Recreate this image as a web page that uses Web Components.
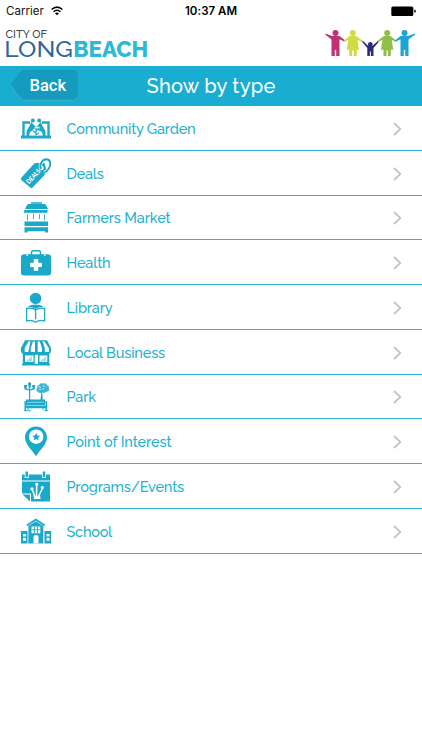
<!DOCTYPE html>
<html lang="en">
<head>
<meta charset="utf-8">
<title>Show by type</title>
<style>
  body {
    margin: 0;
    background: #fff;
    font-family: Raleway, Lato, "Open Sans", sans-serif;
  }
</style>
</head>
<body>
<city-app>
  <status-bar carrier="Carrier" time="10:37 AM"></status-bar>
  <city-logo></city-logo>
  <nav-bar back="Back">Show by type</nav-bar>
  <type-row icon="garden" width="129">Community Garden</type-row>
  <type-row icon="deals" width="37">Deals</type-row>
  <type-row icon="market" width="104">Farmers Market</type-row>
  <type-row icon="health" width="44">Health</type-row>
  <type-row icon="library" width="46">Library</type-row>
  <type-row icon="business" width="98.5">Local Business</type-row>
  <type-row icon="park" width="29.5">Park</type-row>
  <type-row icon="poi" width="105">Point of Interest</type-row>
  <type-row icon="events" width="117.5">Programs/Events</type-row>
  <type-row icon="school" width="45.5">School</type-row>
</city-app>

<script>
// Icons are drawn on a 32x33 grid in the current colour; white parts are cut-outs.
const icons = {
  garden: `
    <path d="M1 23.500h30v3H1z"/>
    <circle cx="12.800" cy="8.500" r="2"/><circle cx="19.200" cy="8.500" r="2"/>
    <path d="M6.500 24v-5l3.500-6 1-3 2 2 3 3-2 3-4 2-1 4.500zM25.500 24v-5l-3.500-6-1-3-2 2-3 3 2 3 4 2 1 4.500z"/>
    <path d="M3.500 24V10.500H10M28.500 24V10.500H22" fill="none" stroke="currentColor" stroke-width="2.400"/>
    <path d="M16 24v-9m0 5-3-2m3 0 3-3m-3 8 3-2" fill="none" stroke="#fff" stroke-width="2.800"/>
    <path d="M16 25v-9m0 5-3-2m3 0 3-3m-3 7 3-2" fill="none" stroke="currentColor" stroke-width="1.200"/>`,
  deals: `
    <path d="M1.500 20.500 14.500 6.300 22.500 5.400q2.200 0 2.500 1.800l1.800 8.500L12.500 30.500q-1 1-2.200 0L1.300 22.900q-1-1 .2-2.400z"/>
    <circle cx="21.500" cy="11" r="2.200" fill="#fff"/>
    <path d="M21 12C19 8 22 2.300 26.300 2.200 31 2.200 31.300 8 28.500 12q-2 3-4.600 3.600" fill="none" stroke="#fff" stroke-width="3.200"/>
    <path d="M21 12C19 8 22 2.300 26.300 2.200 31 2.200 31.300 8 28.500 12q-2 3-4.600 3.600" fill="none" stroke="currentColor" stroke-width="1.900"/>
    <text x="9" y="27.300" transform="rotate(-47 9 27.300)" textLength="17.500" lengthAdjust="spacingAndGlyphs" font-family="Lato" font-size="6.600" font-weight="900" fill="#fff">DEALS</text>`,
  market: `
    <path d="M11 1.200h11v1.500H11zM8 3h17q2 2 3 5H5q1-3 3-5zM4.500 9h23v2.200q-1.200 2-2.500 0-1.300 2-2.600 0-1.300 2-2.600 0-1.300 2-2.600 0-1.300 2-2.600 0-1.300 2-2.600 0-1.300 2-2.600 0-1.300 2-2.600 0-1.700 2-2.800 0z"/>
    <path d="M7.500 13.500v6m17-6v6M13.500 13v5m6-5v5" fill="none" stroke="currentColor" stroke-width=".9"/>
    <path d="M4.500 20.500h23.500V25H4.500zM4.500 26.200h23.500v5.200h-3V30.300h-17.500v1.100h-3z"/>`,
  health: `
    <path d="M11.500 9V6.500q0-1.700 1.700-1.700h5.600q1.700 0 1.700 1.700V9" fill="none" stroke="currentColor" stroke-width="1.500"/>
    <path d="M4 8.200h24q3 0 3 3v15.300q0 3-3 3H4q-3 0-3-3V11.200q0-3 3-3z"/>
    <path d="M6.500 8.200h1.200V10H6.500zm17.800 0h1.200V10h-1.200zM13.800 13h4.400v3.700h3.700V21h-3.700v3.700h-4.400V21h-3.700v-4.300h3.700z" fill="#fff"/>`,
  library: `
    <circle cx="15.600" cy="7.400" r="5.700"/>
    <path d="M7.500 15.500q8-3.800 16.200 0l-2.200.4q-3 .1-5.900 2-3-2-8.100-2.400z"/>
    <path d="M15.600 31.200q-4-2.800-9-1.200V17.500q5.500-1.300 9 1.600 3.500-2.900 9-1.600V30q-5-1.600-9 1.200zm0-12v9" fill="none" stroke="currentColor" stroke-width="1.300"/>`,
  business: `
    <path d="M5 4.200h22l4 7.800q1 5-2.500 6h-25Q0 17 1 12z"/>
    <path d="M8.500 5.500h2L8 17H4.700V12zM13 5.500h2V17h-4.200v-5zM17.700 5.500h2l2.200 6.500v5h-4.200zM22.500 5.500h2l4.500 7v4h-4.200V12z" fill="#fff"/>
    <path d="M2.800 16h26.400v12H2.800zM1.800 27.800h28.400v1.700H1.800z"/>
    <path d="M5 19.500h8.500v6.300H5zm14.500 0h7.800v6.300h-7.800zM14.800 18.800H18v9h-3.200z" fill="#fff"/>
    <path d="m6 25 6-5v5zm14.500 0 5.700-5v5z" opacity=".4"/>`,
  park: `
    <path d="M9.600 2v22M5.500 8.500q4 3 8.200 0" fill="none" stroke="currentColor" stroke-width="1.200"/>
    <path d="M8 3h3.200l-.7 4.500H8.700zM3.900 5h3.200l-.7 4.500H4.600zm8.200 0h3.200l-.7 4.500h-1.800z"/>
    <path d="M22.500 3.500q4.500-1 4.500 1.800 2.500 0 1.800 2.700 1.500 3-1.800 3.600-3 2.500-5 .7-3 1.500-4.700-.8-2-1.900.2-3.500-1.500-2.700 1.700-2.900Q19.700 2.500 22.500 3.500z" opacity=".85"/>
    <path d="m18 6.500 3 1m2-2 2 1m-3 3 2-1m-5 1h2" fill="none" stroke="#fff" stroke-width=".7"/>
    <path d="M21.300 8q1.500 6 1.500 13h-2.500q1-5 1-13z"/>
    <path d="M6 19.500h19v6H6zM4.500 26h22.500v2.200H4.500zM4.500 21H6v10H4.500zm21 0H27v10h-1.500z"/>
    <path d="M7 22.300h17" stroke="#fff" stroke-width=".5"/>
    <path d="M4 30.700h7m13 0h4M8 28v2m15-2v2" stroke="currentColor" stroke-width=".9"/>`,
  poi: `
    <path d="M16 1.500A11 11 0 0 1 27 12.500C27 19 20 25 16 31.300 12 25 5 19 5 12.500A11 11 0 0 1 16 1.500z"/>
    <circle cx="16.200" cy="11.700" r="7.200" fill="#fff"/>
    <path d="m16.200 7.800 1.200 2.600 2.800.3-2.100 2 .6 2.800-2.500-1.400-2.500 1.400.6-2.800-2.100-2 2.800-.3z"/>`,
  events: `
    <path d="M2 4.500h28v6H2zM2 11.500h28v20H11L2 24z"/>
    <path d="M4.700 3h4v5h-4zm17.300 0h4v5h-4z" fill="#fff"/>
    <path d="M5.500 1.600h2.400v5.600H5.500zm17.300 0h2.400v5.600h-2.400z"/>
    <path d="M1 23.500h10v9L1 31z" fill="#fff"/>
    <path d="M2.500 24.500H10v7z"/>
    <path d="m16 29-3.800-9.500M16.500 29l.2-14m.5 14 5-10" fill="none" stroke="#fff" stroke-width="1.500"/>
    <path d="M14 29h6.500L20 24.500 17 27l-3.500-2z" fill="#fff"/>
    <circle cx="12" cy="18.800" r="1.600" fill="#fff"/><circle cx="16.700" cy="14.300" r="1.600" fill="#fff"/><circle cx="22.300" cy="17.500" r="1.600" fill="#fff"/>`,
  school: `
    <path d="m6.800 10.600 9-6 9 6" fill="none" stroke="currentColor" stroke-width="1.800"/>
    <path d="m8.500 11 7.300-4.800L23.300 11v17.500h-15zM1 17h6.500v11.500H1zm23.500 0H31v11.500h-6.500zM.6 16h7.100v1.200H.6zm23.700 0h7.100v1.200h-7.100z"/>
    <path d="M11.500 11.500h8.800v6.700h-8.800zM13.500 28.500v-7.300q2.500-2.200 5 0v7.300zM3 19h3v2.500H3zm0 4h3v2.700H3zm23.500-4h3v2.500h-3zm0 4h3v2.700h-3z" fill="#fff"/>
    <path d="M14.300 11.500v6.700m3.200-6.700v6.700m-6-3.400h8.800" stroke="currentColor" stroke-width=".9"/>`
};

// Spread the letters of a label so that it takes the given width.
function fitText(el, text, width) {
  const natural = el.getBoundingClientRect().width;
  el.style.letterSpacing = `${(width - natural) / text.length}px`;
}

class CityApp extends HTMLElement {
  constructor() {
    super();
    this.attachShadow({ mode: "open" }).innerHTML = `
      <style>
        :host {
          display: flex;
          flex-direction: column;
          height: 750px;
          overflow: hidden;
          background: #fff;
        }
      </style>
      <slot></slot>`;
  }
}

class StatusBar extends HTMLElement {
  constructor() {
    super();
    this.attachShadow({ mode: "open" }).innerHTML = `
      <style>
        :host {
          display: grid;
          grid-template-columns: 1fr auto 1fr;
          align-items: center;
          height: 22px;
          box-sizing: border-box;
          padding: 0 6px;
          font: 11.5px/22px Inter, "Liberation Sans", sans-serif;
          color: #111;
        }
        .left { display: flex; align-items: center; gap: 7px; }
        .time { font-weight: 600; color: #000; }
        .right { display: flex; justify-content: flex-end; }
        svg { display: block; }
      </style>
      <div class="left">
        <span id="carrier">${this.getAttribute("carrier")}</span>
        <svg width="12" height="10" viewBox="0 0 12 10" fill="none" stroke="#000" stroke-width="1.500">
          <path d="M.6 3.500q5.400-4.700 10.800 0M2.500 5.800q3.500-3 7 0"/>
          <path d="M6 9.300 3.900 7.300q2.100-1.500 4.200 0z" fill="#000" stroke="none"/>
        </svg>
      </div>
      <span class="time" id="time">${this.getAttribute("time")}</span>
      <div class="right">
        <svg width="26" height="11" viewBox="0 0 26 11">
          <rect x="1.300" y=".4" width="22" height="9.600" rx="1.500"/>
          <path d="M24.300 3.600q1.500.2 1.500 1.600t-1.500 1.600z"/>
        </svg>
      </div>`;
  }

  connectedCallback() {
    fitText(this.shadowRoot.getElementById("carrier"), "Carrier", 38);
    fitText(this.shadowRoot.getElementById("time"), "10:37 AM", 52);
  }
}

class CityLogo extends HTMLElement {
  constructor() {
    super();
    this.attachShadow({ mode: "open" }).innerHTML = `
      <style>
        :host {
          display: flex;
          justify-content: space-between;
          height: 43.500px;
          box-sizing: border-box;
          padding: 3px 6px 0 5px;
        }
        svg { display: block; }
      </style>
      <svg width="146" height="38" viewBox="5 25 146 38">
        <text x="5.500" y="37.800" font-size="11.600" font-weight="500" textLength="41.500" lengthAdjust="spacingAndGlyphs" fill="#414449">CITY OF</text>
        <text x="4.300" y="56.500" font-size="22.800" font-weight="500" textLength="68.500" lengthAdjust="spacingAndGlyphs" fill="#2f669c">LONG</text>
        <text x="73.300" y="56.500" font-size="22.800" font-weight="800" textLength="75" lengthAdjust="spacingAndGlyphs" fill="#2bb9d5">BEACH</text>
      </svg>
      <svg width="92" height="32" viewBox="324.500 25 92 32">
        <g fill="#c22f72">
          <circle cx="336" cy="33" r="3"/>
          <path d="m326 33.500 6.500 2.500h7.500l5.500 4.300-.8 1.300-4.700-2.300V56h-3.300v-6h-1.400v6H332V39.500l-6-4.800z"/>
        </g>
        <g fill="#d0dc45">
          <circle cx="353.300" cy="33" r="3"/>
          <path d="M350 36h6.600l7 5-.9 1.200-4.700-2.400 1.500 10h-2.300V56h-3v-5.500h-1.500V56h-3v-6.200h-2.500l1.600-10-4 2.400-.8-1.100z"/>
        </g>
        <g fill="#2e2b78">
          <circle cx="370.800" cy="44.200" r="2.300"/>
          <path d="m363.300 40.800 5 4.700h5l5.300-4.700.8 1-5.400 6.200v8h-2.600v-4.500h-1V56h-2.600v-8l-5.200-6.200z"/>
        </g>
        <g fill="#91be4b">
          <circle cx="387.700" cy="33" r="3"/>
          <path d="M384.500 36h6.500l6 4.800-.8 1.300-4-2.300 1.600 10h-2.500V56h-3v-5.500H387V56h-3v-6.200h-2.500l1.500-10-4.500 2.500-.8-1.300z"/>
        </g>
        <g fill="#1da4d4">
          <circle cx="405" cy="33" r="3"/>
          <path d="m415.500 33.500-7 2.500H401l-5.200 4.300.8 1.300 4.400-2.300V56h3.300v-6h1.400v6h3.300V39.500l6.500-4.800z"/>
        </g>
      </svg>`;
  }
}

class NavBar extends HTMLElement {
  constructor() {
    super();
    this.attachShadow({ mode: "open" }).innerHTML = `
      <style>
        :host {
          display: grid;
          grid-template-columns: 1fr auto 1fr;
          align-items: center;
          height: 40.500px;
          box-sizing: border-box;
          padding: 0 10px;
          background: #18add1;
          color: #fff;
        }
        .back {
          display: grid;
          width: 68px;
          height: 31px;
          cursor: pointer;
        }
        .back > * { grid-area: 1 / 1; }
        .label {
          justify-self: start;
          padding: 1px 0 0 19.500px;
          font: 500 16.500px/30px Roboto, sans-serif;
        }
        h1 {
          margin: 0;
          font-size: 20px;
          font-weight: 550;
          line-height: 40px;
          white-space: nowrap;
        }
      </style>
      <div class="back">
        <svg width="68" height="31" viewBox="0 0 68 31">
          <path d="M1 15 10.500 2.500Q12 .7 14 .7H64q3 0 3 3v23.600q0 3-3 3H14q-2 0-3.500-1.800z" fill="#149bbd" stroke="#1492b2" stroke-width=".8"/>
          <path d="M.8 15.500 10.500 28.500q1.500 1.800 3.500 1.800h50q3 0 3-3" fill="none" stroke="#55c2dc" stroke-width=".7"/>
        </svg>
        <span class="label">${this.getAttribute("back")}</span>
      </div>
      <h1><slot></slot></h1>`;
  }

  connectedCallback() {
    fitText(this.shadowRoot.querySelector("h1"), "Show by type", 129);
  }
}

class TypeRow extends HTMLElement {
  constructor() {
    super();
    this.attachShadow({ mode: "open" }).innerHTML = `
      <style>
        :host {
          display: flex;
          align-items: center;
          height: 44.780px;
          flex: none;
          box-sizing: border-box;
          padding: 0 20px;
          border-bottom: 1px solid #2fb9d6;
          color: #1ba9ca;
        }
        svg { display: block; flex: none; fill: currentColor; }
        .icon { margin-top: 1px; }
        .label {
          margin-left: 14.500px;
          padding-top: 2px;
          font-size: 14.500px;
          font-weight: 500;
          line-height: 20px;
          white-space: nowrap;
          color: #23b2cf;
        }
        .chevron { margin: 2px 0 0 auto; fill: none; }
      </style>
      <svg class="icon" width="32" height="33" viewBox="0 0 32 33">${icons[this.getAttribute("icon")]}</svg>
      <span class="label"><slot></slot></span>
      <svg class="chevron" width="9" height="14" viewBox="0 0 9 14">
        <path d="m1 1 6.300 6L1 13" stroke="#c4c4c8" stroke-width="1.800"/>
      </svg>`;
  }

  connectedCallback() {
    fitText(this.shadowRoot.querySelector(".label"), this.textContent, Number(this.getAttribute("width")));
  }
}

customElements.define("city-app", CityApp);
customElements.define("status-bar", StatusBar);
customElements.define("city-logo", CityLogo);
customElements.define("nav-bar", NavBar);
customElements.define("type-row", TypeRow);
</script>
</body>
</html>
